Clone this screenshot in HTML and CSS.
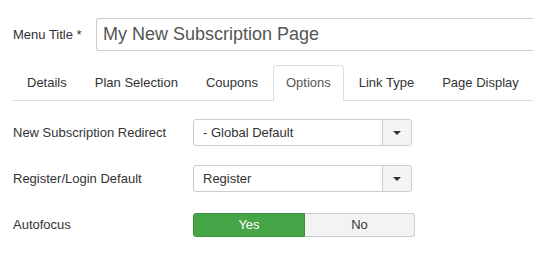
FILE: index.html
```html
<!DOCTYPE html>
<html lang="en">
<head>
    <meta charset="UTF-8">
    <title>Menu Item</title>
    <link rel="stylesheet" href="styles.css">
</head>
<body>

    <div class="title-row">
        <label class="title-label">Menu Title *</label>
        <div class="title-input">My New Subscription Page</div>
    </div>

    <ul class="tabs">
        <li>Details</li>
        <li>Plan Selection</li>
        <li>Coupons</li>
        <li class="active">Options</li>
        <li>Link Type</li>
        <li>Page Display</li>
    </ul>

    <div class="form">
        <div class="row">
            <label>New Subscription Redirect</label>
            <div class="select">
                <span class="value">- Global Default</span>
                <span class="arrow"><i></i></span>
            </div>
        </div>
        <div class="row">
            <label>Register/Login Default</label>
            <div class="select">
                <span class="value">Register</span>
                <span class="arrow"><i></i></span>
            </div>
        </div>
        <div class="row">
            <label>Autofocus</label>
            <div class="toggle">
                <span class="btn yes">Yes</span>
                <span class="btn no">No</span>
            </div>
        </div>
    </div>

</body>
</html>
```

FILE: styles.css
```css
body {
    margin: 0;
    padding: 18px 0 0 13px;
    font-family: "Liberation Sans", Arial, sans-serif;
    font-size: 13px;
    color: #333;
    background: #fff;
    overflow: hidden;
}

.title-row {
    display: flex;
    align-items: center;
    height: 33px;
}

.title-label {
    flex: none;
    width: 83px;
}

/* right edge runs off the window in the screenshot */
.title-input {
    flex: 1;
    height: 31px;
    line-height: 31px;
    border: 1px solid #ccc;
    border-right: none;
    border-radius: 3px 0 0 3px;
    padding-left: 6px;
    font-size: 18px;
    color: #555;
}

.tabs {
    list-style: none;
    margin: 14px 0 0 0;
    padding: 0 0 0 1px;
    display: flex;
    border-bottom: 1px solid #ddd;
}

.tabs li {
    padding: 0 12px;
    height: 34px;
    line-height: 34px;
    margin-right: 2px;
    border: 1px solid transparent;
    border-bottom: none;
    border-radius: 4px 4px 0 0;
    margin-bottom: -1px;
    white-space: nowrap;
}

.tabs li.active {
    border-color: #ddd;
    background: #fff;
    height: 35px;
    color: #555;
}

.form {
    padding-top: 18px;
}

.row {
    display: flex;
    align-items: center;
    height: 27px;
    margin-bottom: 19px;
}

.row label {
    flex: none;
    width: 180px;
}

.select {
    display: flex;
    width: 217px;
    height: 25px;
    border: 1px solid #ccc;
    border-radius: 3px;
}

.select .value {
    flex: 1;
    line-height: 25px;
    padding-left: 9px;
}

.select .arrow {
    width: 28px;
    border-left: 1px solid #ccc;
    background: #f5f5f5;
    display: flex;
    align-items: center;
    justify-content: center;
    border-radius: 0 3px 3px 0;
}

.select .arrow i {
    width: 0;
    height: 0;
    border-left: 4px solid transparent;
    border-right: 4px solid transparent;
    border-top: 4px solid #333;
}

.toggle {
    display: flex;
    height: 24px;
}

.toggle .btn {
    line-height: 22px;
    text-align: center;
    border: 1px solid #ccc;
}

.toggle .yes {
    width: 110px;
    background: #46a546;
    border-color: #3d8f3d;
    color: #fff;
    border-radius: 3px 0 0 3px;
}

.toggle .no {
    width: 109px;
    background: #f3f3f3;
    border-left: none;
    border-radius: 0 3px 3px 0;
}
```
